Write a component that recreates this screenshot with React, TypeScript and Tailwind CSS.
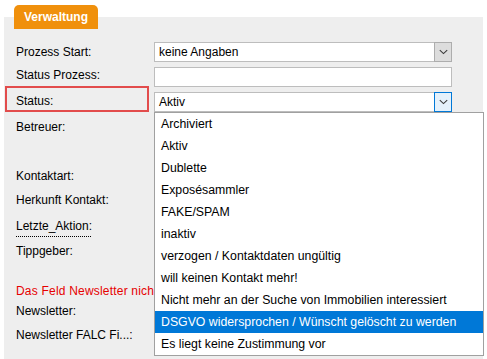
const labels: { text: string; mt: string; red?: boolean; dotted?: boolean }[] = [
  { text: "Prozess Start:", mt: "mt-[28px]" },
  { text: "Status Prozess:", mt: "mt-[9px]" },
  { text: "Status:", mt: "mt-[12px]" },
  { text: "Betreuer:", mt: "mt-[12px]" },
  { text: "Kontaktart:", mt: "mt-[35px]" },
  { text: "Herkunft Kontakt:", mt: "mt-[10px]" },
  { text: "Letzte_Aktion:", mt: "mt-[12px]", dotted: true },
  { text: "Tippgeber:", mt: "mt-[11px]" },
  { text: "Das Feld Newsletter nicht gesetzt", mt: "mt-[26px]", red: true },
  { text: "Newsletter:", mt: "mt-[6px]" },
  { text: "Newsletter FALC Fi...:", mt: "mt-[10px]" },
];

const options = [
  "Archiviert",
  "Aktiv",
  "Dublette",
  "Exposésammler",
  "FAKE/SPAM",
  "inaktiv",
  "verzogen / Kontaktdaten ungültig",
  "will keinen Kontakt mehr!",
  "Nicht mehr an der Suche von Immobilien interessiert",
  "DSGVO widersprochen / Wünscht gelöscht zu werden",
  "Es liegt keine Zustimmung vor",
];

function Chevron() {
  return (
    <svg width="9" height="6" viewBox="0 0 9 6" fill="none">
      <path d="M0.8 1.2 L4.5 4.6 L8.2 1.2" stroke="#3a3a3a" strokeWidth="1.1" />
    </svg>
  );
}

function Select({ value, focused }: { value: string; focused?: boolean }) {
  return (
    <div className="flex h-[20px] w-[298px] items-center border border-[#bdbdbd] bg-white">
      <span className="flex-1 pl-[4px] leading-[14px]">{value}</span>
      <div
        className={
          focused
            ? "-my-px -mr-px flex h-[20px] w-[18px] items-center justify-center border border-[#0078d7] bg-[#e5f1fb]"
            : "-my-px -mr-px flex h-[20px] w-[18px] items-center justify-center border border-[#adadad] bg-[#dddddd]"
        }
      >
        <Chevron />
      </div>
    </div>
  );
}

export default function App() {
  return (
    <div className="relative h-[359px] w-[487px] overflow-hidden bg-white font-['Liberation_Sans',Arial,sans-serif] text-[12px] text-black">
      <div className="px-[4px] pt-[5px]">
        <div className="relative z-10 ml-[10px] flex h-[24px] w-[84px] items-center justify-center rounded-t-[5px] bg-[#f0900c] text-[12px] font-bold text-white">
          Verwaltung
        </div>
        <div className="-mt-[12px] flex h-[342px] w-[479px] bg-[#eeeeee] pl-[12px]">
          <div className="relative flex w-[138px] flex-col">
            <div className="absolute left-[-11px] top-[69px] h-[26px] w-[144px] border-2 border-[#e24c4c]" />
            {labels.map((l) => (
              <div
                key={l.text}
                className={`${l.mt} h-[14px] whitespace-nowrap leading-[14px] ${
                  l.red ? "tracking-[0.2px] text-[#e60000]" : ""
                } ${l.dotted ? "underline decoration-dotted decoration-1 underline-offset-[6px]" : ""}`}
              >
                {l.text}
              </div>
            ))}
          </div>
          <div className="flex flex-col gap-[5px] pt-[25px]">
            <Select value="keine Angaben" />
            <div className="h-[20px] w-[298px] border border-[#bdbdbd] bg-white" />
            <Select value="Aktiv" focused />
          </div>
        </div>
      </div>

      <div className="absolute left-[154px] top-[112px] w-[330px] border border-[#a0a0a0] bg-white">
        {options.map((o, i) => (
          <div
            key={o}
            className={`flex h-[22px] items-center whitespace-nowrap pl-[6px] text-[12.3px] ${
              i === 9 ? "bg-[#0078d7] text-white" : "text-black"
            }`}
          >
            {o}
          </div>
        ))}
      </div>
    </div>
  );
}
